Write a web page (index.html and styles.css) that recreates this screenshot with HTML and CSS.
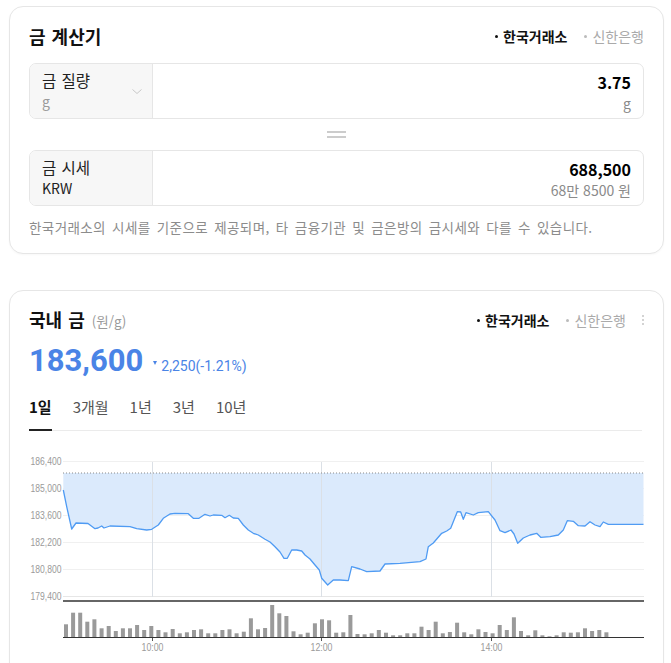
FILE: index.html
```html
<!DOCTYPE html>
<html lang="ko">
<head>
<meta charset="utf-8">
<title>금 시세</title>
<link rel="stylesheet" href="styles.css">
</head>
<body>
<div class="page">
  <section class="card calc">
    <div class="card-head">
      <h2 class="title">금 계산기</h2>
      <div class="sources">
        <span class="src on">한국거래소</span>
        <span class="src">신한은행</span>
      </div>
    </div>
    <div class="field">
      <div class="field-label">
        <div class="lbl-text">
          <span class="lbl-main">금 질량</span>
          <span class="lbl-sub">g</span>
        </div>
        <svg class="chev" width="10" height="5" viewBox="0 0 10 5"><polyline points="0.5,0.5 5,4.5 9.5,0.5" fill="none" stroke="#c9c9c9" stroke-width="1"/></svg>
      </div>
      <div class="field-value">
        <span class="val-main">3.75</span>
        <span class="val-sub">g</span>
      </div>
    </div>
    <div class="equals"><span class="bar"></span><span class="bar"></span></div>
    <div class="field">
      <div class="field-label">
        <div class="lbl-text">
          <span class="lbl-main">금 시세</span>
          <span class="lbl-sub dark">KRW</span>
        </div>
      </div>
      <div class="field-value">
        <span class="val-main">688,500</span>
        <span class="val-sub">68만 8500 원</span>
      </div>
    </div>
    <p class="note">한국거래소의 시세를 기준으로 제공되며, 타 금융기관 및 금은방의 금시세와 다를 수 있습니다.</p>
  </section>

  <section class="card market">
    <div class="card-head">
      <h2 class="title">국내 금 <span class="unit">(원/g)</span></h2>
      <div class="sources">
        <span class="src on">한국거래소</span>
        <span class="src">신한은행</span>
        <span class="kebab"><i></i><i></i><i></i></span>
      </div>
    </div>
    <div class="price-row">
      <strong class="price">183,600</strong>
      <span class="change"><span class="tri"></span>2,250(-1.21%)</span>
    </div>
    <nav class="tabs">
      <span class="tab active">1일</span>
      <span class="tab">3개월</span>
      <span class="tab">1년</span>
      <span class="tab">3년</span>
      <span class="tab">10년</span>
    </nav>
    <svg class="chart" width="653" height="230" viewBox="10 440 653 230">
      <g class="grid" stroke="#f0f0f0" stroke-width="1">
        <line x1="63" y1="461.5" x2="644" y2="461.5"/>
        <line x1="63" y1="488.5" x2="644" y2="488.5"/>
        <line x1="63" y1="515.5" x2="644" y2="515.5"/>
        <line x1="63" y1="542.5" x2="644" y2="542.5"/>
        <line x1="63" y1="569.5" x2="644" y2="569.5"/>
        <line x1="63" y1="596.5" x2="644" y2="596.5" stroke="#e6e6e6"/>
      </g>
      <path d="M63.3,490 L66.7,506.7 L71.7,529 L76,523 L88,523.5 L95,528.7 L98,528 L101.7,526 L104,528 L110,526 L130,526.7 L136.7,528.7 L146.7,530 L151.7,529.3 L158.3,525 L163.3,518.3 L170,514 L175,513.3 L188.3,513.7 L193.3,518.3 L199,518.3 L205,514.3 L210,516 L213.3,515 L221.7,515.3 L225,517.7 L229.3,515.3 L233.3,518 L238.3,518.3 L243.3,525 L248.3,530 L253.3,533.3 L258.3,535 L265,539.3 L270,542 L275,546.7 L280,552 L284,558.3 L287.3,558.3 L291.7,550 L296.7,550 L301.7,551 L305,555 L310,559 L315,565 L319.3,570 L321.7,578.3 L327.7,585 L333.3,580 L340,580 L348.3,580.7 L351.7,566.7 L360,569 L366.7,571.7 L380,571 L385,564 L400,563.3 L420,561.7 L426,559 L428.3,546.7 L433.3,543 L441.7,533.3 L446.7,531 L450.7,528.3 L454,520 L457.3,511.7 L460.7,512 L463.3,519.3 L466,512.7 L473.3,515 L478.3,512.7 L488.3,511.7 L495,520 L500,530.7 L505,532.7 L511,530 L514,534 L517.7,543.3 L523.3,538 L530,535 L536.7,533.3 L540.7,537.3 L550,536.7 L558.3,535 L563.3,530 L567.3,520.7 L573.3,521.3 L578.3,525.7 L585,526 L590,521.7 L595,525 L600,526.7 L603.3,522 L608.3,524.3 L643.5,524.3 L643.5,473 L63.3,473 Z" fill="#dbeafc"/>
      <g stroke="#dbe0e6" stroke-width="1">
        <line x1="152.5" y1="462" x2="152.5" y2="597"/>
        <line x1="321.5" y1="462" x2="321.5" y2="597"/>
        <line x1="491.5" y1="462" x2="491.5" y2="597"/>
      </g>
      <line x1="63" y1="473" x2="644" y2="473" stroke="#8a8a8a" stroke-width="1" stroke-dasharray="1,2"/>
      <path d="M63.3,490 L66.7,506.7 L71.7,529 L76,523 L88,523.5 L95,528.7 L98,528 L101.7,526 L104,528 L110,526 L130,526.7 L136.7,528.7 L146.7,530 L151.7,529.3 L158.3,525 L163.3,518.3 L170,514 L175,513.3 L188.3,513.7 L193.3,518.3 L199,518.3 L205,514.3 L210,516 L213.3,515 L221.7,515.3 L225,517.7 L229.3,515.3 L233.3,518 L238.3,518.3 L243.3,525 L248.3,530 L253.3,533.3 L258.3,535 L265,539.3 L270,542 L275,546.7 L280,552 L284,558.3 L287.3,558.3 L291.7,550 L296.7,550 L301.7,551 L305,555 L310,559 L315,565 L319.3,570 L321.7,578.3 L327.7,585 L333.3,580 L340,580 L348.3,580.7 L351.7,566.7 L360,569 L366.7,571.7 L380,571 L385,564 L400,563.3 L420,561.7 L426,559 L428.3,546.7 L433.3,543 L441.7,533.3 L446.7,531 L450.7,528.3 L454,520 L457.3,511.7 L460.7,512 L463.3,519.3 L466,512.7 L473.3,515 L478.3,512.7 L488.3,511.7 L495,520 L500,530.7 L505,532.7 L511,530 L514,534 L517.7,543.3 L523.3,538 L530,535 L536.7,533.3 L540.7,537.3 L550,536.7 L558.3,535 L563.3,530 L567.3,520.7 L573.3,521.3 L578.3,525.7 L585,526 L590,521.7 L595,525 L600,526.7 L603.3,522 L608.3,524.3 L643.5,524.3" fill="none" stroke="#4f9bf3" stroke-width="1.3" stroke-linejoin="round"/>
      <g class="ylabels" font-family="Liberation Sans, Arial, sans-serif" font-size="10.5" fill="#9a9a9a" text-anchor="end">
        <text x="61.5" y="465.3" textLength="31" lengthAdjust="spacingAndGlyphs">186,400</text>
        <text x="61.5" y="492.3" textLength="31" lengthAdjust="spacingAndGlyphs">185,000</text>
        <text x="61.5" y="519.3" textLength="31" lengthAdjust="spacingAndGlyphs">183,600</text>
        <text x="61.5" y="546.3" textLength="31" lengthAdjust="spacingAndGlyphs">182,200</text>
        <text x="61.5" y="573.3" textLength="31" lengthAdjust="spacingAndGlyphs">180,800</text>
        <text x="61.5" y="600.3" textLength="31" lengthAdjust="spacingAndGlyphs">179,400</text>
      </g>
      <line x1="63" y1="601" x2="644" y2="601" stroke="#333" stroke-width="1.3"/>
      <g fill="#9a9a9a">
        <rect x="64" y="624.3" width="4" height="12.7"/>
        <rect x="71.1" y="612.7" width="4" height="24.3"/>
        <rect x="78.2" y="612.7" width="4" height="24.3"/>
        <rect x="85.3" y="621.7" width="4" height="15.3"/>
        <rect x="92.4" y="619.3" width="4" height="17.7"/>
        <rect x="99.6" y="628.3" width="4" height="8.7"/>
        <rect x="106.7" y="626" width="4" height="11"/>
        <rect x="113.8" y="631" width="4" height="6"/>
        <rect x="120.9" y="628.3" width="4" height="8.7"/>
        <rect x="128" y="628.3" width="4" height="8.7"/>
        <rect x="135.1" y="625" width="4" height="12"/>
        <rect x="142.2" y="630" width="4" height="7"/>
        <rect x="149.3" y="626" width="4" height="11"/>
        <rect x="156.4" y="630" width="4" height="7"/>
        <rect x="163.5" y="632.3" width="4" height="4.7"/>
        <rect x="170.7" y="629" width="4" height="8"/>
        <rect x="177.8" y="633.3" width="4" height="3.7"/>
        <rect x="184.9" y="632.3" width="4" height="4.7"/>
        <rect x="192" y="630" width="4" height="7"/>
        <rect x="199.1" y="629.3" width="4" height="7.7"/>
        <rect x="206.2" y="633.3" width="4" height="3.7"/>
        <rect x="213.3" y="633.3" width="4" height="3.7"/>
        <rect x="220.4" y="630" width="4" height="7"/>
        <rect x="227.5" y="629.3" width="4" height="7.7"/>
        <rect x="234.6" y="633.3" width="4" height="3.7"/>
        <rect x="241.8" y="631.7" width="4" height="5.3"/>
        <rect x="248.9" y="618.3" width="4" height="18.7"/>
        <rect x="256" y="629.3" width="4" height="7.7"/>
        <rect x="263.1" y="628" width="4" height="9"/>
        <rect x="270.2" y="605" width="4" height="32"/>
        <rect x="277.3" y="613.3" width="4" height="23.7"/>
        <rect x="284.4" y="616" width="4" height="21"/>
        <rect x="291.5" y="631.3" width="4" height="5.7"/>
        <rect x="298.6" y="634.3" width="4" height="2.7"/>
        <rect x="305.7" y="632.7" width="4" height="4.3"/>
        <rect x="312.9" y="623.3" width="4" height="13.7"/>
        <rect x="320" y="619.3" width="4" height="17.7"/>
        <rect x="327.1" y="620.3" width="4" height="16.7"/>
        <rect x="334.2" y="632.7" width="4" height="4.3"/>
        <rect x="341.3" y="632.3" width="4" height="4.7"/>
        <rect x="348.4" y="615" width="4" height="22"/>
        <rect x="355.5" y="634" width="4" height="3"/>
        <rect x="362.6" y="634.3" width="4" height="2.7"/>
        <rect x="369.7" y="633.3" width="4" height="3.7"/>
        <rect x="376.8" y="630" width="4" height="7"/>
        <rect x="384" y="632.7" width="4" height="4.3"/>
        <rect x="391.1" y="635.3" width="4" height="1.7"/>
        <rect x="398.2" y="635.3" width="4" height="1.7"/>
        <rect x="405.3" y="633.3" width="4" height="3.7"/>
        <rect x="412.4" y="633.3" width="4" height="3.7"/>
        <rect x="419.5" y="626.7" width="4" height="10.3"/>
        <rect x="426.6" y="630" width="4" height="7"/>
        <rect x="433.7" y="621.7" width="4" height="15.3"/>
        <rect x="440.8" y="633.3" width="4" height="3.7"/>
        <rect x="447.9" y="632" width="4" height="5"/>
        <rect x="455.1" y="622.7" width="4" height="14.3"/>
        <rect x="462.2" y="632.3" width="4" height="4.7"/>
        <rect x="469.3" y="634.3" width="4" height="2.7"/>
        <rect x="476.4" y="629.3" width="4" height="7.7"/>
        <rect x="483.5" y="632" width="4" height="5"/>
        <rect x="490.6" y="633.3" width="4" height="3.7"/>
        <rect x="497.7" y="625" width="4" height="12"/>
        <rect x="504.8" y="630" width="4" height="7"/>
        <rect x="511.9" y="617.3" width="4" height="19.7"/>
        <rect x="519" y="631" width="4" height="6"/>
        <rect x="526.2" y="635.3" width="4" height="1.7"/>
        <rect x="533.3" y="630.3" width="4" height="6.7"/>
        <rect x="540.4" y="635.3" width="4" height="1.7"/>
        <rect x="547.5" y="636.3" width="4" height="0.7"/>
        <rect x="554.6" y="635.3" width="4" height="1.7"/>
        <rect x="561.7" y="632.3" width="4" height="4.7"/>
        <rect x="568.8" y="632.7" width="4" height="4.3"/>
        <rect x="575.9" y="632.3" width="4" height="4.7"/>
        <rect x="583" y="628.3" width="4" height="8.7"/>
        <rect x="590.1" y="631" width="4" height="6"/>
        <rect x="597.3" y="630" width="4" height="7"/>
        <rect x="604.4" y="632.3" width="4" height="4.7"/>
      </g>
      <line x1="63" y1="637.5" x2="644" y2="637.5" stroke="#333" stroke-width="1"/>
      <g stroke="#555" stroke-width="1">
        <line x1="152.5" y1="638" x2="152.5" y2="641"/>
        <line x1="321.5" y1="638" x2="321.5" y2="641"/>
        <line x1="491.5" y1="638" x2="491.5" y2="641"/>
      </g>
      <g font-family="Liberation Sans, Arial, sans-serif" font-size="10.5" fill="#9a9a9a" text-anchor="middle">
        <text x="152.5" y="650.5" textLength="22" lengthAdjust="spacingAndGlyphs">10:00</text>
        <text x="321.5" y="650.5" textLength="22" lengthAdjust="spacingAndGlyphs">12:00</text>
        <text x="491.5" y="650.5" textLength="22" lengthAdjust="spacingAndGlyphs">14:00</text>
      </g>
    </svg>
  </section>
</div>
</body>
</html>
```

FILE: styles.css
```css
* {
  box-sizing: border-box;
  margin: 0;
  padding: 0;
}

html, body {
  background: #ffffff;
}

body {
  font-family: "Noto Sans CJK KR", "Noto Sans", sans-serif;
  color: #1e1e23;
  height: 663px;
  overflow: hidden;
}

.page {
  padding: 6px 0 0 9px;
  display: flex;
  flex-direction: column;
  gap: 36px;
}

.card {
  width: 655px;
  border: 1px solid #e6e6e6;
  border-radius: 14px;
  background: #fff;
  padding: 16px 19px 0 19px;
  box-shadow: 0 1px 2px rgba(0, 0, 0, 0.03);
}

.calc {
  height: 248px;
}

.market {
  height: 420px;
}

.card-head {
  display: flex;
  justify-content: space-between;
  align-items: center;
  height: 26px;
}

.title {
  font-size: 18px;
  font-weight: 700;
  line-height: 26px;
  color: #111;
  word-spacing: 1px;
}

.unit {
  font-size: 13.5px;
  font-weight: 400;
  color: #9a9a9a;
  margin-left: 1px;
  word-spacing: 0;
}

.sources {
  display: flex;
  align-items: center;
  gap: 17px;
  font-size: 14px;
  line-height: 20px;
}

.src {
  display: flex;
  align-items: center;
  gap: 5px;
  color: #aaaaaa;
}

.src::before {
  content: "";
  width: 3px;
  height: 3px;
  border-radius: 50%;
  background: #bbbbbb;
}

.src.on {
  color: #111;
  font-weight: 700;
}

.src.on::before {
  background: #111;
}

.kebab {
  display: flex;
  flex-direction: column;
  gap: 2px;
  margin-left: -1px;
}

.kebab i {
  display: block;
  width: 2px;
  height: 2px;
  border-radius: 50%;
  background: #c4c4c4;
}

/* calculator fields */
.field {
  display: flex;
  height: 56px;
  margin-top: 14px;
  border: 1px solid #e6e6e6;
  border-radius: 7px;
  overflow: hidden;
}

.field-label {
  width: 123px;
  flex: none;
  background: #f7f7f7;
  border-right: 1px solid #e6e6e6;
  display: flex;
  align-items: center;
  justify-content: space-between;
  padding: 0 10px 0 12px;
}

.lbl-text {
  display: flex;
  flex-direction: column;
}

.lbl-main {
  font-size: 15.5px;
  line-height: 21px;
  color: #222;
  word-spacing: 1px;
}

.lbl-sub {
  font-size: 14px;
  line-height: 21px;
  color: #9a9a9a;
}

.lbl-sub.dark {
  color: #222;
}

.chev {
  display: block;
}

.field-value {
  flex: 1;
  display: flex;
  flex-direction: column;
  align-items: flex-end;
  justify-content: center;
  padding: 2px 12px 0 0;
}

.val-main {
  font-size: 16px;
  font-weight: 700;
  line-height: 22px;
  color: #000;
}

.val-sub {
  font-size: 14px;
  line-height: 20px;
  color: #8a8a8a;
}

.equals {
  height: 31px;
  display: flex;
  flex-direction: column;
  align-items: center;
  justify-content: center;
  gap: 3px;
}

.equals .bar {
  display: block;
  width: 19px;
  height: 2px;
  background: #cccccc;
}

.equals + .field {
  margin-top: 0;
}

.note {
  margin-top: 11px;
  font-size: 13.5px;
  line-height: 20px;
  color: #8c8c8c;
  letter-spacing: 0.4px;
  word-spacing: 2px;
  white-space: nowrap;
}

/* market card */
.price-row {
  display: flex;
  align-items: baseline;
  margin-top: 8px;
  height: 40px;
}

.price {
  font-family: "Roboto", sans-serif;
  font-size: 31px;
  font-weight: 700;
  line-height: 40px;
  color: #4a84e6;
}

.change {
  display: flex;
  align-items: baseline;
  margin-left: 10px;
  font-family: "Roboto", sans-serif;
  font-size: 14px;
  color: #4a84e6;
}

.tri {
  align-self: center;
  width: 0;
  height: 0;
  margin-right: 4px;
  border-left: 2.5px solid transparent;
  border-right: 2.5px solid transparent;
  border-top: 4px solid #4a84e6;
  transform: translateY(-3px);
}

.tabs {
  display: flex;
  gap: 21px;
  margin-top: 15px;
  border-bottom: 1px solid #ebebeb;
  margin-right: 2px;
}

.tab {
  font-size: 15px;
  line-height: 22px;
  height: 34px;
  color: #555;
}

.tab.active {
  font-weight: 700;
  color: #111;
  border-bottom: 2px solid #222;
  margin-bottom: -1px;
  height: 35px;
}

.chart {
  display: block;
  margin: 9px 0 0 -19px;
}
```
